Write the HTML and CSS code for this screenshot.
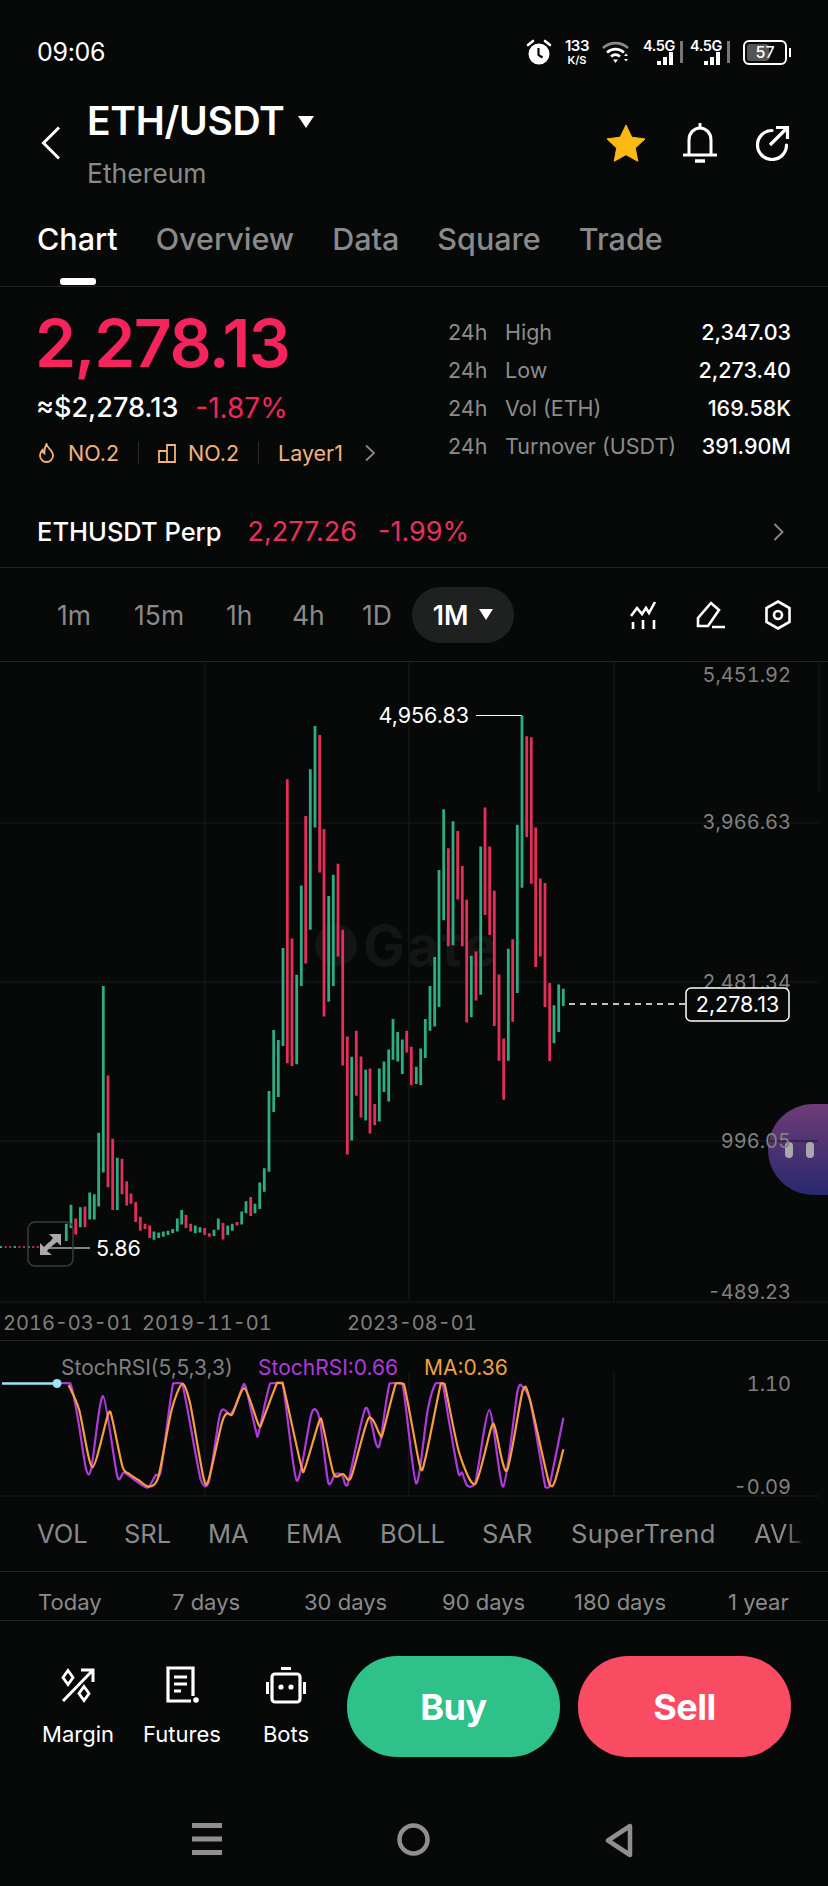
FILE: index.html
```html
<!DOCTYPE html>
<html lang="en">
<head>
    <meta charset="UTF-8">
    <meta name="viewport" content="width=device-width, initial-scale=1.0">
    <title>ETH/USDT</title>
    <link rel="stylesheet" href="styles.css">
</head>
<body>
    <div class="status-bar">
        <span class="time">09:06</span>
        <div class="status-icons">
            <svg width="26" height="26" viewBox="0 0 26 26"><path d="M2 6l5-4M24 6l-5-4" stroke="#fff" stroke-width="2.6" stroke-linecap="round"/><circle cx="13" cy="15" r="10.5" fill="#fff"/><path d="M12.5 9v7l4 2.5" stroke="#070808" stroke-width="2.2" fill="none"/></svg>
            <div class="speed"><b>133</b><small>K/S</small></div>
            <svg class="wifi" width="27" height="23" viewBox="0 0 27 23"><path d="M1 7c7-6.500 18-6.500 25 0" stroke="#8a8a8a" stroke-width="2.6" fill="none"/><path d="M5 11.500c5-4.500 12-4.500 17 0M9 15.500c3-2.500 6-2.500 9 0" stroke="#fff" stroke-width="2.6" fill="none"/><path d="M11 18.500h5l-2.500 3.500z" fill="#fff"/><path d="M22 15l2-2.500 2 2.500zM22 18l2 2.500 2-2.500z" fill="#fff"/></svg>
            <div class="net"><span>4.5G</span><svg width="24" height="14" viewBox="0 0 24 14"><path d="M5 10h4v4H5zM11 6h4v8h-4zM17 1h4v13h-4z" fill="#fff"/></svg></div>
            <i class="net-sep"></i>
            <div class="net"><span>4.5G</span><svg width="24" height="14" viewBox="0 0 24 14"><path d="M5 10h4v4H5zM11 6h4v8h-4zM17 1h4v13h-4z" fill="#fff"/></svg></div>
            <i class="net-sep"></i>
            <div class="battery"><div class="battery-fill"></div><span>57</span></div>
        </div>
    </div>

    <header class="top">
        <svg class="back" width="20" height="34" viewBox="0 0 20 34"><path d="M18 1.500L2.500 17 18 32.500" stroke="#fff" stroke-width="3" fill="none"/></svg>
        <div class="pair">
            <div class="pair-name">ETH/USDT <i class="caret caret-lg"></i></div>
            <div class="pair-sub">Ethereum</div>
        </div>
        <div class="top-icons">
            <svg width="40" height="38" viewBox="0 0 40 38"><path d="M20 1l5.800 12.200 13.200 1.700-9.700 9.200 2.500 13.200L20 30.700 8.200 37.300l2.500-13.200L1 14.900l13.200-1.700z" fill="#fdb913" stroke="#fdb913" stroke-linejoin="round"/></svg>
            <svg width="34" height="40" viewBox="0 0 34 40"><path d="M17 1v4M6 31V17C6 10 11 5 17 5s11 5 11 12v14M1 32h32" stroke="#fff" stroke-width="3" fill="none" stroke-linecap="round"/><path d="M12 38h10" stroke="#fff" stroke-width="3.500"/></svg>
            <svg width="36" height="36" viewBox="0 0 36 36"><path d="M18 5.500A14.500 14.500 0 1 0 32.500 20" stroke="#fff" stroke-width="3.200" fill="none" stroke-linecap="round"/><path d="M16 20L33 3M22 2.500h11.500V14" stroke="#fff" stroke-width="3.200" fill="none"/></svg>
        </div>
    </header>

    <nav class="tabs">
        <span class="tab active">Chart</span>
        <span class="tab">Overview</span>
        <span class="tab">Data</span>
        <span class="tab">Square</span>
        <span class="tab">Trade</span>
    </nav>

    <section class="summary">
        <div class="price-col">
            <div class="price">2,278.13</div>
            <div class="price-sub"><span>≈$2,278.13</span><span class="red">-1.87%</span></div>
            <div class="tags">
                <svg width="17" height="20" viewBox="0 0 17 20"><path d="M8.500 1c.5 4 6.500 6 6.500 11.500a6.500 6.500 0 0 1-13 0c0-2.500 1-4 2.500-5.500.3 2 1 3 2 3.500C6 7 7 4 8.500 1z" stroke="#f4b27c" stroke-width="1.800" fill="none"/></svg>
                <span class="tag tag-first">NO.2</span>
                <i class="tag-sep"></i>
                <svg width="18" height="19" viewBox="0 0 18 19"><path d="M1 7h8v11H1zM9 18V1h8v17H9" stroke="#f4b27c" stroke-width="1.800" fill="none"/></svg>
                <span class="tag">NO.2</span>
                <i class="tag-sep"></i>
                <span class="tag">Layer1</span>
                <svg class="tag-arrow" width="12" height="18" viewBox="0 0 12 18"><path d="M2 1.500L10 9l-8 7.500" stroke="#8a8a8a" stroke-width="1.800" fill="none"/></svg>
            </div>
        </div>
        <div class="stats">
            <div class="stat"><span>24h</span><span>High</span><b>2,347.03</b></div>
            <div class="stat"><span>24h</span><span>Low</span><b>2,273.40</b></div>
            <div class="stat"><span>24h</span><span>Vol (ETH)</span><b>169.58K</b></div>
            <div class="stat"><span>24h</span><span>Turnover (USDT)</span><b>391.90M</b></div>
        </div>
    </section>

    <div class="perp">
        <span class="perp-name">ETHUSDT Perp</span>
        <span class="perp-price">2,277.26</span>
        <span class="perp-price">-1.99%</span>
        <svg class="perp-arrow" width="11" height="18" viewBox="0 0 11 18"><path d="M1.500 1L9.500 9l-8 8" stroke="#8a8a8a" stroke-width="1.800" fill="none"/></svg>
    </div>

    <div class="intervals">
        <span class="interval i-1m">1m</span>
        <span class="interval i-15m">15m</span>
        <span class="interval i-1h">1h</span>
        <span class="interval i-4h">4h</span>
        <span class="interval i-1d">1D</span>
        <span class="interval-active">1M <i class="caret"></i></span>
        <div class="tools">
            <svg width="28" height="28" viewBox="0 0 28 28"><path d="M1 15l6-8 5 6 4-6 3 5 6-11" stroke="#fff" stroke-width="2.600" fill="none"/><path d="M3 21v7M13 19v9M24 19v9" stroke="#fff" stroke-width="2.600"/></svg>
            <svg width="30" height="28" viewBox="0 0 30 28"><path d="M2 25V17L15 2l8 7-11 16zM16 26h13" stroke="#fff" stroke-width="2.600" fill="none"/></svg>
            <svg width="28" height="30" viewBox="0 0 28 30"><path d="M14 1.500l11.500 6.500v14L14 28.500 2.500 22V8z" stroke="#fff" stroke-width="2.600" fill="none"/><circle cx="14" cy="15" r="4" stroke="#fff" stroke-width="2.600" fill="none"/></svg>
        </div>
    </div>

    <section class="chart">
        <div class="bubble"><i></i><i></i></div>
        <svg id="priceChart" width="828" height="678" viewBox="0 0 828 678">
            <g class="grid">
                <path d="M0 161H818M0 320H818M0 479H818M0 640H828M205 0V640M409 0V640M614 0V640M819 0V130"/>
            </g>
            <circle cx="336" cy="283" r="21" fill="#141515"/>
            <text class="watermark" x="363" y="304">Gate</text>
            <path class="dots" d="M0 585H43"/>
            <path class="dots-up" d="M0 585H43"/>
            <path id="upBars" class="bars up"/>
            <path id="downBars" class="bars down"/>
            <text class="axis end" x="791" y="20">5,451.92</text>
            <text class="axis end" x="791" y="167">3,966.63</text>
            <text class="axis end" x="791" y="327">2,481.34</text>
            <text class="axis end" x="791" y="486">996.05</text>
            <text class="axis end" x="791" y="637">-489.23</text>
            <text class="axis" x="3" y="668">2016-03-01</text>
            <text class="axis" x="142" y="668">2019-11-01</text>
            <text class="axis" x="347" y="668">2023-08-01</text>
            <path class="leader" d="M476 53.500H521.500M40 586H90"/>
            <text class="mark end" x="469" y="61">4,956.83</text>
            <text class="mark" x="96" y="594">5.86</text>
            <path class="last-line" d="M569 342H686"/>
            <rect class="last-box" x="686" y="326" width="103" height="33" rx="5"/>
            <text class="mark middle" x="737.500" y="350">2,278.13</text>
            <rect class="expand" x="28" y="560" width="45" height="44" rx="7"/>
            <path d="M49 572h12v12l-4-4-6 5-3-3 5-6zM52 593H40V581l4 4 5-5 3 3-5 6z" fill="#aaa"/>
        </svg>
    </section>

    <section class="stoch">
        <svg id="stochChart" width="828" height="156" viewBox="0 0 828 156">
            <path class="grid-line" d="M205 31V155M409 31V155M614 31V155M0 155H820"/>
            <text class="legend" x="61" y="34">StochRSI(5,5,3,3)</text>
            <text class="legend purple" x="258" y="34">StochRSI:0.66</text>
            <text class="legend orange" x="424" y="34">MA:0.36</text>
            <text class="axis end" x="791" y="50">1.10</text>
            <text class="axis end" x="791" y="153">-0.09</text>
            <path id="stochLine" class="line purple-line"/>
            <path id="maLine" class="line orange-line"/>
            <path d="M2 42.500H57" stroke="#9be6f7" stroke-width="2.500"/>
            <circle cx="57" cy="42.500" r="4.500" fill="#9be6f7"/>
        </svg>
    </section>

    <div class="indicators">
        <span class="ind-vol">VOL</span>
        <span class="ind-srl">SRL</span>
        <span class="ind-ma">MA</span>
        <span class="ind-ema">EMA</span>
        <span class="ind-boll">BOLL</span>
        <span class="ind-sar">SAR</span>
        <span class="ind-st">SuperTrend</span>
        <span class="ind-avl">AVL</span>
    </div>

    <div class="ranges">
        <span class="range-today">Today</span>
        <span class="range-7">7 days</span>
        <span class="range-30">30 days</span>
        <span class="range-90">90 days</span>
        <span class="range-180">180 days</span>
        <span>1 year</span>
    </div>

    <div class="actions">
        <div class="action">
            <svg width="36" height="36" viewBox="0 0 36 36"><path d="M3 34L33 3M21 3h12v12" stroke="#fff" stroke-width="3" fill="none"/><path d="M8 3.500l5 7-5 7-5-7zM24 19.500l5 7-5 7-5-7z" stroke="#fff" stroke-width="2.800" fill="#070808"/></svg>
            <span>Margin</span>
        </div>
        <div class="action">
            <svg width="36" height="38" viewBox="0 0 36 38"><path d="M29 30V2H4v33h23" stroke="#fff" stroke-width="3.200" fill="none"/><path d="M10 11h13M10 18h13M10 25h7" stroke="#fff" stroke-width="3"/><circle cx="32" cy="34" r="2.800" fill="#fff"/></svg>
            <span>Futures</span>
        </div>
        <div class="action">
            <svg width="40" height="38" viewBox="0 0 40 38"><rect x="6" y="8" width="28" height="28" rx="3" stroke="#fff" stroke-width="3.200" fill="none"/><path d="M15 2.500h10M1.500 16v12M38.500 16v12" stroke="#fff" stroke-width="3"/><circle cx="15" cy="21" r="2.600" fill="#fff"/><circle cx="25" cy="21" r="2.600" fill="#fff"/></svg>
            <span>Bots</span>
        </div>
        <div class="trade-btn buy">Buy</div>
        <div class="trade-btn sell">Sell</div>
    </div>

    <div class="nav-bar">
        <svg width="30" height="32" viewBox="0 0 30 32"><path d="M0 2.500h30M0 16h30M0 29.500h30" stroke="#8f8f8f" stroke-width="5"/></svg>
        <svg width="33" height="33" viewBox="0 0 33 33"><circle cx="16.500" cy="16.500" r="14" stroke="#8f8f8f" stroke-width="4.500" fill="none"/></svg>
        <svg width="28" height="35" viewBox="0 0 28 35"><path d="M25 3v29L3 17.500z" stroke="#8f8f8f" stroke-width="4.500" fill="none" stroke-linejoin="round"/></svg>
    </div>

    <script src="chart.js"></script>
</body>
</html>
```

FILE: styles.css
```css
* {
    box-sizing: border-box;
}

body, html {
    margin: 0;
    padding: 0;
    background-color: #070808;
    color: white;
    font-family: 'Inter', 'Liberation Sans', sans-serif;
}

body {
    width: 828px;
    height: 1886px;
    overflow: hidden;
}

.red {
    color: #f5245c;
}

.caret {
    display: inline-block;
    width: 0;
    height: 0;
    border-left: 7px solid transparent;
    border-right: 7px solid transparent;
    border-top: 11px solid white;
}

.caret-lg {
    border-left-width: 8px;
    border-right-width: 8px;
    border-top-width: 12px;
    margin-left: 4px;
    vertical-align: 7px;
}

/* status bar */
.status-bar {
    height: 104px;
    padding: 0 41px 0 37px;
    display: flex;
    align-items: center;
    justify-content: space-between;
}

.time {
    font-size: 25px;
    letter-spacing: -0.3px;
}

.status-icons {
    display: flex;
    align-items: center;
}

.speed {
    width: 24px;
    display: flex;
    flex-direction: column;
    align-items: center;
    margin: 0 13px;
    line-height: 1;
}

.speed b {
    font-size: 15px;
    font-weight: 600;
    letter-spacing: -0.5px;
}

.speed small {
    font-size: 11px;
    font-weight: 600;
    margin-top: 2px;
}

.wifi {
    margin-right: 14px;
}

.net {
    width: 33px;
    height: 26px;
    position: relative;
    font-size: 14.500px;
    font-weight: 600;
    letter-spacing: -0.4px;
    line-height: 1;
}

.net svg {
    position: absolute;
    right: 0;
    bottom: 0;
}

.net-sep {
    width: 3px;
    height: 22px;
    margin: 0 7px 0 4px;
    background-color: #777;
}

.battery {
    width: 44px;
    height: 25px;
    margin-left: 6px;
    border: 2px solid white;
    border-radius: 6px;
    position: relative;
    font-size: 16px;
    font-weight: 500;
    text-align: center;
    line-height: 21px;
}

.battery-fill {
    position: absolute;
    left: 2px;
    top: 2px;
    bottom: 2px;
    width: 22px;
    border-radius: 3px;
    background-color: #555;
}

.battery span {
    position: relative;
}

.battery::after {
    content: '';
    position: absolute;
    right: -6px;
    top: 6px;
    width: 2px;
    height: 9px;
    background-color: white;
}

/* header */
.top {
    height: 106px;
    padding: 0 38px 28px 41px;
    display: flex;
    align-items: center;
}

.back {
    margin-right: 26px;
}

.pair-name {
    font-size: 39px;
    font-weight: 600;
    line-height: 44px;
    letter-spacing: -0.3px;
}

.pair-sub {
    margin-top: 15px;
    font-size: 26.500px;
    line-height: 30px;
    color: #8a8a8a;
}

.top-icons {
    margin-left: auto;
    display: flex;
    align-items: center;
    gap: 37px;
}

/* tabs */
.tabs {
    height: 77px;
    padding: 0 38px 0 37px;
    display: flex;
    gap: 38px;
    border-bottom: 1px solid #222324;
}

.tab {
    position: relative;
    padding-top: 11px;
    line-height: 36px;
    font-size: 30.500px;
    font-weight: 500;
    color: #8a8a8a;
}

.tab.active {
    color: white;
}

.tab.active::after {
    content: '';
    position: absolute;
    left: 23px;
    width: 36px;
    top: 68px;
    height: 7px;
    border-radius: 3px;
    background-color: white;
}

/* price summary */
.summary {
    height: 206px;
    padding: 0 37px 0 37px;
    display: flex;
    justify-content: space-between;
}

.price {
    padding-top: 20px;
    margin-left: -2px;
    font-size: 66px;
    font-weight: 600;
    line-height: 72px;
    letter-spacing: -1.5px;
    color: #f5245c;
}

.price-sub {
    margin-top: 12px;
    margin-left: -1px;
    display: flex;
    gap: 17px;
    font-size: 27px;
    line-height: 34px;
    font-weight: 500;
}

.price-sub .red {
    font-weight: 400;
    font-size: 28px;
}

.tags {
    margin-top: 13px;
    padding-left: 1px;
    display: flex;
    align-items: center;
    font-size: 21.500px;
    line-height: 30px;
    color: #f4b27c;
}

.tag-first {
    margin-left: 13px;
}

.tag-sep + svg {
    margin-right: 12px;
}

.tag-sep {
    width: 1px;
    height: 22px;
    margin: 0 19px;
    background-color: #2a2a2a;
}

.tag-arrow {
    margin-left: 21px;
}

.stats {
    width: 343px;
    padding-top: 26px;
}

.stat {
    display: flex;
    height: 38px;
    align-items: center;
    font-size: 21.500px;
    color: #8c8c8c;
}

.stat span:first-child {
    width: 57px;
}

.stat b {
    margin-left: auto;
    font-weight: 500;
    color: white;
}

/* perpetual row */
.perp {
    height: 75px;
    padding: 3px 44px 0 37px;
    display: flex;
    align-items: center;
    font-size: 27px;
    border-bottom: 1px solid #222324;
}

.perp-name {
    font-size: 25.500px;
    font-weight: 500;
    margin-right: 26px;
}

.perp-price {
    color: #e8305f;
    margin-right: 21px;
}

.perp-arrow {
    margin-left: auto;
}

/* intervals */
.intervals {
    height: 94px;
    padding-left: 57px;
    display: flex;
    align-items: center;
    font-size: 26.500px;
    color: #8a8a8a;
    border-bottom: 1px solid #222324;
}

.i-1m { width: 77px; }
.i-15m { width: 92px; }
.i-1h { width: 66px; }
.i-4h { width: 70px; }
.i-1d { width: 50px; }

.interval-active {
    width: 102px;
    height: 56px;
    border-radius: 28px;
    background-color: #1f2020;
    color: white;
    font-weight: 600;
    display: flex;
    align-items: center;
    justify-content: center;
    gap: 11px;
}

.tools {
    margin-left: auto;
    padding-right: 36px;
    display: flex;
    align-items: center;
    gap: 38px;
}

/* chart */
.chart {
    height: 679px;
    position: relative;
    border-bottom: 1px solid #222324;
}

.chart svg, .stoch svg {
    display: block;
    position: relative;
    overflow: visible;
}

.bubble {
    position: absolute;
    right: 0;
    top: 442px;
    width: 60px;
    height: 91px;
    border-radius: 46px 0 0 46px;
    background: linear-gradient(#6f3b78, #28296e);
    display: flex;
    align-items: center;
    gap: 13px;
    padding: 0 0 0 17px;
}

.bubble i {
    width: 8px;
    height: 16px;
    border-radius: 4px;
    background-color: #a9a9a9;
}

.grid path, .grid-line {
    stroke: #1a1b1c;
    stroke-width: 1;
    fill: none;
}

.watermark {
    font-size: 56px;
    font-weight: 700;
    letter-spacing: 2px;
    fill: #141515;
}

.bars {
    stroke-width: 2.800;
    fill: none;
}

.up {
    stroke: #2bae84;
}

.down {
    stroke: #e62e5a;
}

.dots {
    stroke: #c0304f;
    stroke-width: 2;
    stroke-dasharray: 2 2.600;
}

.dots-up {
    stroke: #2bae84;
    stroke-width: 2;
    stroke-dasharray: 2 11.800;
}

.axis {
    font-size: 20px;
    font-feature-settings: 'tnum';
    fill: #808080;
}

.legend {
    font-size: 21px;
    fill: #808080;
}

.end {
    text-anchor: end;
}

.middle {
    text-anchor: middle;
}

.mark {
    font-size: 21.500px;
    fill: white;
}

.leader {
    stroke: white;
    stroke-width: 1.200;
    fill: none;
}

.last-line {
    stroke: white;
    stroke-width: 1.500;
    stroke-dasharray: 6 5;
}

.last-box {
    fill: #070808;
    stroke: white;
    stroke-width: 1.500;
}

.expand {
    fill: none;
    stroke: #3a3b3c;
    stroke-width: 1.500;
}

/* stoch rsi */
.stoch {
    height: 156px;
}

.legend.purple {
    fill: #b03adf;
}

.legend.orange {
    fill: #f2a03d;
}

.line {
    fill: none;
    stroke-width: 2.200;
    stroke-linejoin: round;
}

.purple-line {
    stroke: #b03adf;
}

.orange-line {
    stroke: #f5a03c;
}

/* indicator tabs */
.indicators {
    height: 75px;
    padding: 0 0 2px 37px;
    display: flex;
    align-items: center;
    font-size: 25.500px;
    color: #8a8a8a;
    border-bottom: 1px solid #222324;
    white-space: nowrap;
    overflow: hidden;
}

.ind-vol { width: 87px; }
.ind-srl { width: 84px; }
.ind-ma { width: 78px; }
.ind-ema { width: 94px; }
.ind-boll { width: 102px; }
.ind-sar { width: 89px; }

.ind-st {
    width: 183px;
    letter-spacing: 0.5px;
}

.ind-avl {
    background: linear-gradient(90deg, #8a8a8a 65%, #222 100%);
    -webkit-background-clip: text;
    background-clip: text;
    color: transparent;
}

.ranges {
    height: 49px;
    padding: 12px 38px 0;
    display: flex;
    align-items: center;
    font-size: 22px;
    color: #8a8a8a;
    border-bottom: 1px solid #222324;
}

.range-today { width: 134px; }
.range-7 { width: 132px; }
.range-30 { width: 138px; }
.range-90 { width: 132px; }
.range-180 { width: 154px; }

/* bottom actions */
.actions {
    height: 169px;
    padding: 35px 37px 0 26px;
    display: flex;
    align-items: flex-start;
}

.action {
    width: 104px;
    display: flex;
    flex-direction: column;
    align-items: center;
    font-size: 22px;
    line-height: 28px;
    padding-top: 10px;
}

.action svg {
    height: 38px;
    margin-bottom: 16px;
}

.trade-btn {
    width: 213px;
    height: 101px;
    border-radius: 50px;
    display: flex;
    align-items: center;
    justify-content: center;
    font-size: 36px;
    font-weight: 700;
    letter-spacing: -0.5px;
}

.buy {
    margin-left: 9px;
    background-color: #2ec189;
}

.sell {
    margin-left: 18px;
    background-color: #f94c63;
}

.nav-bar {
    height: 96px;
    padding: 33px 195px 0 192px;
    display: flex;
    justify-content: space-between;
    align-items: flex-start;
}
```

FILE: chart.js
```js
// bars are [x, top, bottom] read off a 3x / 2.306x crop of the chart
const SCALE_X = 3;
const SCALE_Y = 2.306;
const CHART_TOP = 662;
const CROP_TOP = 660;

const leftBars = [
    [199,1300,1340,'g'],[213,1256,1310,'g'],[227,1288,1325,'r'],[241,1262,1308,'g'],[255,1260,1308,'r'],
    [269,1228,1290,'g'],[283,1232,1290,'g'],[296,1090,1260,'g'],[310,752,1182,'g'],[324,958,1216,'r'],
    [338,1104,1268,'r'],[352,1148,1268,'g'],[366,1150,1232,'r'],[380,1202,1258,'r'],[393,1230,1254,'r'],
    [407,1250,1296,'r'],[421,1284,1316,'r'],[435,1300,1312,'r'],[449,1304,1333,'r'],[462,1318,1337,'g'],
    [476,1320,1333,'g'],[490,1318,1330,'g'],[504,1316,1326,'g'],[518,1312,1322,'g'],[532,1288,1318,'g'],
    [545,1268,1302,'g'],[558,1280,1310,'r'],[572,1300,1318,'r'],[586,1304,1322,'g'],[600,1308,1320,'g'],
    [614,1310,1326,'r'],[628,1322,1330,'r'],[642,1314,1328,'g'],[655,1288,1314,'g'],[669,1298,1336,'r'],
    [683,1304,1326,'g'],[697,1300,1316,'g'],[711,1296,1304,'r'],[725,1272,1302,'g'],[738,1248,1276,'g'],
    [752,1238,1282,'r'],[765,1254,1276,'g'],[779,1205,1266,'g'],[793,1172,1226,'g'],[807,994,1180,'g'],
    [821,853,1042,'g'],[835,876,1008,'g'],[849,664,890,'g'],[862,275,930,'r'],[876,642,936,'r'],
    [890,726,932,'g'],[904,520,752,'g'],[917,360,700,'r'],[931,252,622,'g'],[945,152,386,'g'],
    [959,173,490,'r'],[972,390,822,'r'],[986,544,788,'g'],[1000,495,752,'g'],[1014,470,684,'r'],
    [1028,622,935,'r'],[1042,868,1140,'r'],[1055,915,1108,'g'],[1069,855,1005,'r'],[1083,914,1055,'r'],
    [1097,945,1062,'g'],[1110,942,1092,'r'],[1124,1024,1072,'r'],[1138,942,1064,'g'],[1152,926,996,'g'],
    [1166,898,1018,'g'],[1179,828,922,'g'],[1193,858,926,'g'],[1207,875,955,'g'],[1220,855,905,'r'],
    [1234,892,980,'r']
];

const rightBars = [
    [7,938,978,'g'],[20,896,980,'g'],[34,828,918,'g'],[48,752,855,'g'],[62,685,845,'g'],
    [75,484,800,'g'],[89,344,600,'g'],[103,434,660,'r'],[117,372,658,'g'],[131,394,552,'r'],
    [145,475,660,'r'],[158,553,836,'r'],[172,682,824,'g'],[186,672,785,'r'],[200,430,772,'g'],
    [213,340,588,'r'],[227,430,634,'r'],[241,532,844,'r'],[255,725,924,'r'],[269,873,1014,'r'],
    [283,666,924,'g'],[296,644,834,'r'],[310,380,768,'g'],[324,128,525,'g'],[338,176,408,'r'],
    [352,178,516,'r'],[365,386,708,'r'],[379,504,684,'r'],[393,514,800,'r'],[407,745,925,'r'],
    [420,796,884,'g'],[434,748,858,'g'],[448,758,798,'g']
];

let up = '';
let down = '';

function addBars(bars, offsetX) {
    bars.forEach(function(bar) {
        const x = (offsetX + bar[0] / SCALE_X).toFixed(1);
        const top = (CROP_TOP + bar[1] / SCALE_Y - CHART_TOP).toFixed(1);
        const bottom = (CROP_TOP + bar[2] / SCALE_Y - CHART_TOP).toFixed(1);
        const seg = 'M' + x + ' ' + top + 'V' + bottom;
        if (bar[3] === 'g') {
            up += seg;
        } else {
            down += seg;
        }
    });
}

addBars(leftBars, 0);
addBars(rightBars, 414);
document.getElementById('upBars').setAttribute('d', up);
document.getElementById('downBars').setAttribute('d', down);

// stoch lines, same idea: crop coordinates, 1.894x across and 3x down
const stoch = [108,190,133,190,148,300,163,448,173,445,195,228,222,468,235,458,262,488,280,503,295,465,305,450,328,190,345,190,380,478,395,488,415,295,423,268,435,282,445,262,460,198,465,198,485,335,490,338,512,190,535,190,562,482,590,280,605,295,622,490,635,462,648,465,658,496,692,265,712,370,720,368,738,190,762,190,788,490,810,270,825,190,838,190,850,300,868,458,875,458,885,497,900,490,927,270,953,500,980,215,988,197,1005,250,1033,502,1040,502,1067,293];
const ma = [130,195,150,270,175,442,205,282,213,300,232,440,245,462,262,480,282,500,300,470,325,270,345,192,360,250,385,470,395,480,420,310,430,280,440,282,463,205,490,315,498,300,525,188,535,188,570,435,578,442,605,302,612,320,632,462,650,462,665,472,698,295,720,345,725,340,750,190,765,192,795,435,805,420,835,190,842,192,870,400,900,492,930,325,938,325,960,452,990,212,1003,235,1040,490,1050,488,1067,388];

// catmull-rom through the points so the curves aren't jagged
function linePath(points) {
    const pts = [];
    for (let i = 0; i < points.length; i += 2) {
        pts.push([points[i] / 1.894, points[i + 1] / 3 - 21]);
    }
    let d = 'M' + pts[0][0].toFixed(1) + ' ' + pts[0][1].toFixed(1);
    for (let i = 0; i < pts.length - 1; i++) {
        const p0 = pts[Math.max(i - 1, 0)];
        const p1 = pts[i];
        const p2 = pts[i + 1];
        const p3 = pts[Math.min(i + 2, pts.length - 1)];
        const c1x = p1[0] + (p2[0] - p0[0]) / 8;
        const c1y = Math.min(Math.max(p1[1] + (p2[1] - p0[1]) / 8, 42), 147);
        const c2x = p2[0] - (p3[0] - p1[0]) / 8;
        const c2y = Math.min(Math.max(p2[1] - (p3[1] - p1[1]) / 8, 42), 147);
        d += 'C' + c1x.toFixed(1) + ' ' + c1y.toFixed(1) + ' ' + c2x.toFixed(1) + ' ' + c2y.toFixed(1) + ' ' + p2[0].toFixed(1) + ' ' + p2[1].toFixed(1);
    }
    return d;
}

document.getElementById('stochLine').setAttribute('d', linePath(stoch));
document.getElementById('maLine').setAttribute('d', linePath(ma));
```
